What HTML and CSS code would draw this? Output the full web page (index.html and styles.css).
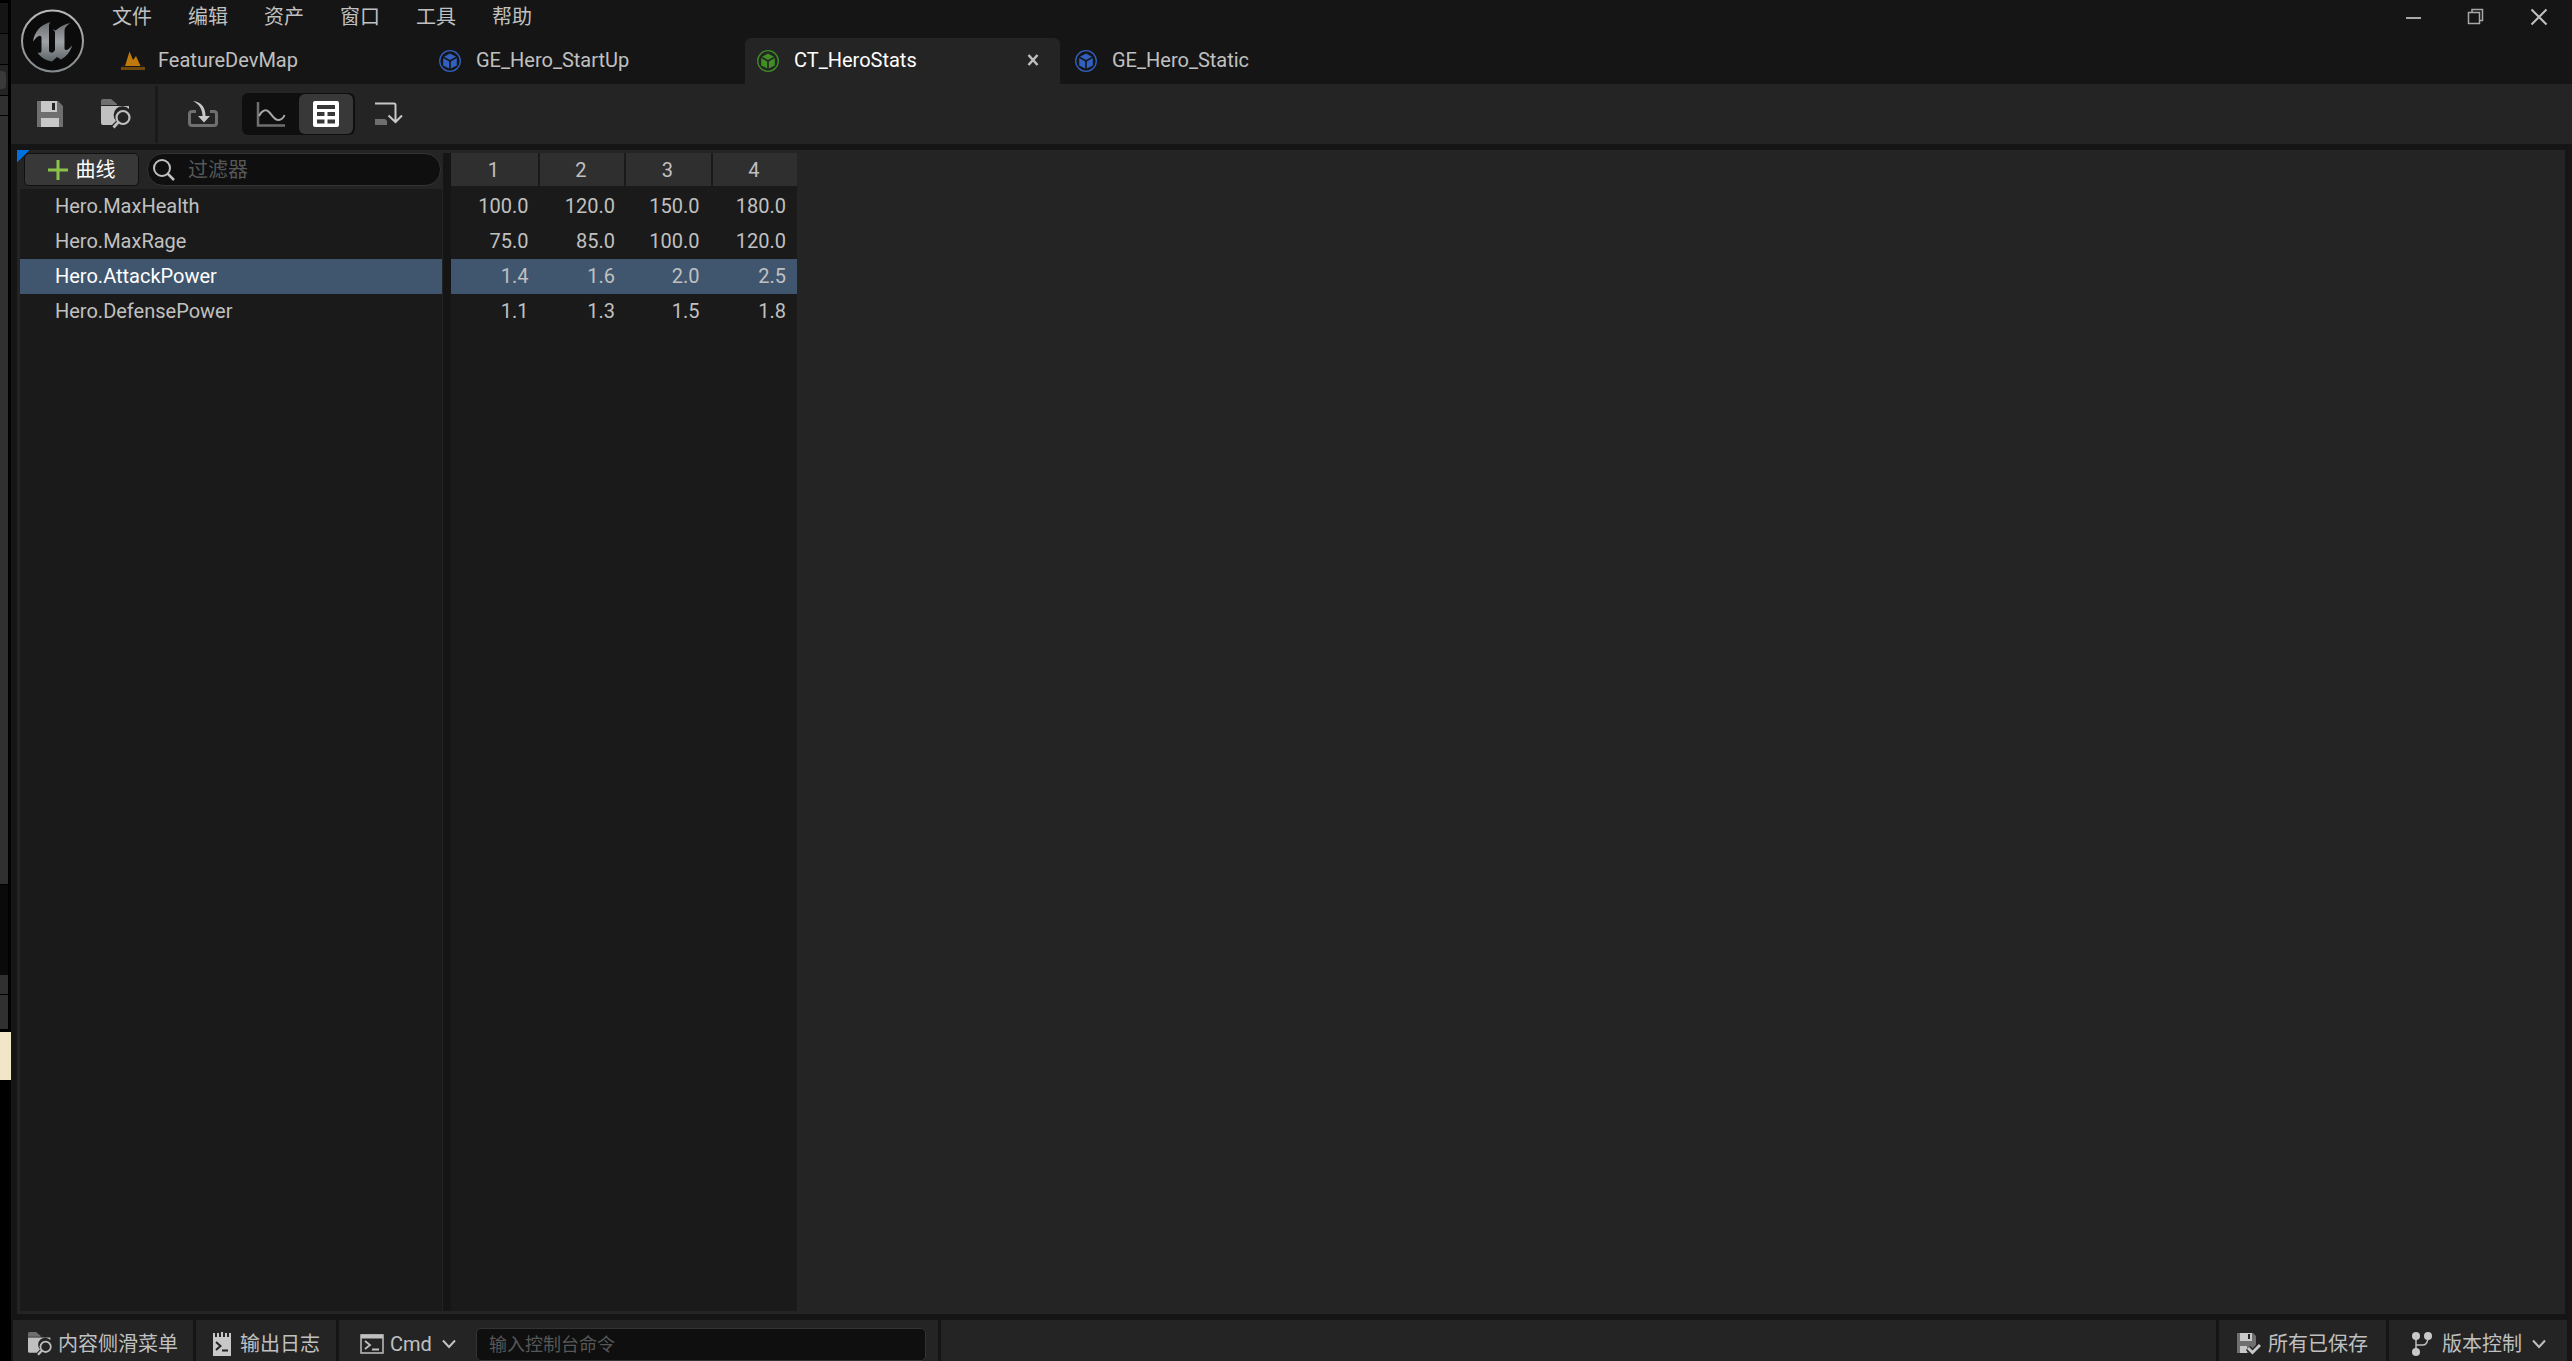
FILE: index.html
```html
<!DOCTYPE html>
<html lang="zh-CN">
<head>
<meta charset="utf-8">
<title>CT_HeroStats</title>
<link rel="stylesheet" href="styles.css">
</head>
<body>
<svg class="defs" aria-hidden="true">
  <symbol id="cube" viewBox="0 -1 24 24">
    <circle cx="11" cy="11" r="10.3" fill="none" stroke="currentColor" stroke-width="1.3"/>
    <path fill="currentColor" d="M11 3.4 17 6.7 11 10 5 6.7ZM4.2 8 10.2 11.4V18.6L4.2 15.4ZM17.8 8 11.8 11.4V18.6L17.8 15.4Z"/>
  </symbol>
  <symbol id="folder-search" viewBox="0 0 30 30">
    <path fill="#6f6f6f" d="M0 2Q0 0 2 0H10L16 5V6H0Z"/>
    <path fill="#c0c0c0" d="M0 7H28V10A8.6 8.6 0 0 0 15 22L11 26H2Q0 26 0 24Z"/>
    <circle cx="22" cy="18.500" r="6.500" fill="none" stroke="#c0c0c0" stroke-width="2.200"/>
    <path d="M17.500 23 12.500 28.500" stroke="#c0c0c0" stroke-width="2.800"/>
  </symbol>
  <symbol id="chevron" viewBox="0 0 14 10">
    <path d="M1 1.500 7 8 13 1.500" fill="none" stroke="#c0c0c0" stroke-width="2"/>
  </symbol>
</svg>

<div class="desktop">
  <div class="backdrop" aria-hidden="true">
    <i class="b-title"></i><i class="b-row"></i><i class="b-tool"></i><i class="b-sub"></i><i class="b-panel"></i><i class="b-dark"></i><i class="b-sub"></i><i class="b-foot"></i><i class="b-cream"></i>
  </div>

  <div class="editor">
    <header class="titlebar">
      <svg class="logo" viewBox="0 0 64 64" aria-label="Unreal Engine">
        <defs>
          <linearGradient id="metal" x1="0" y1="0" x2="0" y2="1"><stop offset="0" stop-color="#686c70"/><stop offset=".5" stop-color="#a0a3a6"/><stop offset="1" stop-color="#5c6468"/></linearGradient>
          <linearGradient id="ring" x1="0" y1="0" x2="0" y2="1"><stop offset="0" stop-color="#b8b8b8"/><stop offset="1" stop-color="#858a8c"/></linearGradient>
        </defs>
        <circle cx="31.500" cy="32" r="30.500" fill="#0b0b0b" stroke="url(#ring)" stroke-width="2"/>
        <path fill="url(#metal)" d="M29.500 13C20 15.500 13.500 22 12 32.500C15 28.500 18 26 19.500 27C20.500 27.500 20.500 28.500 20.500 29.500V41.500C20.500 44 19 44 16.500 43.500C20 49 25.500 51.500 31 52.500L36 48L40 50.500C45.500 47.500 49.500 42.500 51 36.500C49 39 47 41 45 41C43.500 41 43.500 40 43.500 38.500V21.500C43.500 19 46 16 49.500 14C44 15 38.500 18 34.500 21.500C33.500 20.500 32.500 20.500 31.500 20.500C33.500 21.500 34 22.500 34 24V41C33 43 31.500 44 30 43.500C28.500 43.500 28 42.500 28 41V18.500C28 16 28 15 29.500 13Z"/>
      </svg>
      <div class="bars">
        <div class="menu-row">
          <nav class="menu">
            <button>文件</button><button>编辑</button><button>资产</button><button>窗口</button><button>工具</button><button>帮助</button>
          </nav>
          <div class="window-buttons">
            <button aria-label="最小化"><svg width="18" height="18"><path d="M2 10H17" stroke="#a8a8a8" stroke-width="2"/></svg></button>
            <button aria-label="还原"><svg width="18" height="18"><path d="M5 4V1.500H15.500V12.500H13" fill="none" stroke="#a8a8a8" stroke-width="1.500"/><path d="M1.500 4.500H12.500V15.500H1.500Z" fill="none" stroke="#a8a8a8" stroke-width="1.500"/></svg></button>
            <button aria-label="关闭"><svg width="18" height="18"><path d="M1.500 1.500 16.500 16.500M16.500 1.500 1.500 16.500" stroke="#c0c0c0" stroke-width="2"/></svg></button>
          </div>
        </div>
        <div class="tabs" role="tablist">
          <div class="tab"><svg class="tab-icon map" viewBox="0 0 24 20"><path fill="#c07a0c" d="M4 15 8.500 0.500 12 9 15 5 19.500 15Z"/><path fill="#70490f" d="M2.500 12 1 19H23L21.500 12 22 16H2Z"/><path d="M0 17.500H24" stroke="#70490f" stroke-width="3"/></svg><button role="tab">FeatureDevMap</button></div>
          <div class="tab"><svg class="tab-icon blue"><use href="#cube"/></svg><button role="tab">GE_Hero_StartUp</button></div>
          <div class="tab active"><svg class="tab-icon green"><use href="#cube"/></svg><button role="tab" aria-selected="true">CT_HeroStats</button><button class="tab-close" aria-label="关闭标签页"><svg width="12" height="12"><path d="M1.500 1 10.500 11M10.500 1 1.500 11" stroke="#c0c0c0" stroke-width="2.500"/></svg></button></div>
          <div class="tab"><svg class="tab-icon blue"><use href="#cube"/></svg><button role="tab">GE_Hero_Static</button></div>
        </div>
      </div>
    </header>

    <div class="toolbar">
      <button class="tool save" aria-label="保存"><svg width="26" height="28"><path fill="#6f6f6f" d="M0 1H21L26 6V27H0Z"/><path fill="#c8c8c8" d="M4 1H20V12H4ZM4 18H22V27H4Z"/><path fill="#242424" d="M15 3H18V10H15Z"/></svg></button>
      <button class="tool" aria-label="浏览"><svg width="30" height="30"><use href="#folder-search"/></svg></button>
      <span class="tool-divider"></span>
      <button class="tool import" aria-label="重新导入"><svg width="30" height="28"><path d="M8 11.500H4Q1.500 11.500 1.500 14V23Q1.500 25.500 4 25.500H26Q28.500 25.500 28.500 23V14Q28.500 11.500 26 11.500H22" fill="none" stroke="#6f6f6f" stroke-width="3"/><path fill="#c8c8c8" d="M5 1C13 2 17.500 7 17.500 16H22L16 22.500 10 16H14.500C14.500 9 11 4 5 1Z"/></svg></button>
      <div class="view-switch">
        <button aria-label="曲线视图"><svg width="30" height="28"><path d="M2 2V25.500H29" fill="none" stroke="#6f6f6f" stroke-width="2.500"/><path d="M3 16C6 10 10 9 13 12C17 16 19 21 23 20C26 19.500 27.500 18 28.500 15" fill="none" stroke="#a8a8a8" stroke-width="2"/></svg></button>
        <button class="on" aria-label="表格视图"><svg width="28" height="28"><path fill="#fff" fill-rule="evenodd" d="M3 1H25Q27 1 27 3V25Q27 27 25 27H3Q1 27 1 25V3Q1 1 3 1ZM5 5V9H23V5ZM5 12V16H12.500V12ZM15.500 12V16H23V12ZM5 19.500V23.500H12.500V19.500ZM15.500 19.500V23.500H23V19.500Z"/></svg></button>
      </div>
      <button class="tool append" aria-label="附加"><svg width="30" height="26"><path d="M1 2.500H20Q21.500 2.500 21.500 4V21M14.500 14.500 21.500 21 28 14.500" fill="none" stroke="#c8c8c8" stroke-width="2"/><path fill="#6f6f6f" d="M1 18H10Q13 18 13 21V24H1Z"/></svg></button>
    </div>

    <main class="panel">
      <section class="curves">
        <div class="curve-head">
          <button class="add"><svg width="20" height="20"><path d="M10 0V20M0 10H20" stroke="#8bc34a" stroke-width="3"/></svg>曲线</button>
          <label class="search"><svg width="24" height="24"><circle cx="10" cy="10" r="8" fill="none" stroke="#c0c0c0" stroke-width="2"/><path d="M15.500 15.500 22 22" stroke="#c0c0c0" stroke-width="2.500"/></svg><input type="search" placeholder="过滤器" aria-label="过滤器"></label>
        </div>
        <ul class="curve-list">
          <li>Hero.MaxHealth</li>
          <li>Hero.MaxRage</li>
          <li class="selected">Hero.AttackPower</li>
          <li>Hero.DefensePower</li>
        </ul>
      </section>
      <div class="splitter"></div>
      <section class="values">
        <table>
          <thead><tr><th>1</th><th>2</th><th>3</th><th>4</th></tr></thead>
          <tbody>
            <tr><td>100.0</td><td>120.0</td><td>150.0</td><td>180.0</td></tr>
            <tr><td>75.0</td><td>85.0</td><td>100.0</td><td>120.0</td></tr>
            <tr class="selected"><td>1.4</td><td>1.6</td><td>2.0</td><td>2.5</td></tr>
            <tr><td>1.1</td><td>1.3</td><td>1.5</td><td>1.8</td></tr>
          </tbody>
        </table>
      </section>
    </main>

    <footer class="status">
      <button class="seg drawer"><svg width="24" height="24"><use href="#folder-search"/></svg>内容侧滑菜单</button>
      <button class="seg log"><svg width="18" height="24"><path fill="#c8c8c8" d="M0 1H2V5H4V1H6V5H8V0H10V5H12V1H14V5H16V1H18V24H0Z"/><path d="M3 10 7.500 14 3 18M9 18.500H15" fill="none" stroke="#242424" stroke-width="2"/></svg>输出日志</button>
      <div class="seg console">
        <svg width="24" height="20"><path d="M1 1H23V19H1Z" fill="none" stroke="#c0c0c0" stroke-width="1.500"/><path d="M1 2.500H23" stroke="#c0c0c0" stroke-width="4"/><path d="M5 7 10 11 5 15M12 15.500H19" fill="none" stroke="#c0c0c0" stroke-width="1.800"/></svg>
        <span class="picker"><select aria-label="命令类型"><option>Cmd</option></select><svg width="14" height="10"><use href="#chevron"/></svg></span>
        <input type="text" placeholder="输入控制台命令" aria-label="输入控制台命令">
      </div>
      <div class="seg filler"></div>
      <button class="seg saved"><svg width="24" height="24"><path fill="#6f6f6f" d="M0 1H16L19 4V16L14 21H0Z"/><path fill="#c8c8c8" d="M3 1H15V9H3ZM3 14H10V21H3Z"/><path fill="#242424" d="M11 2H13V7H11Z"/><path d="M11 16 15.500 20.500 23 13" fill="none" stroke="#242424" stroke-width="6"/><path d="M11 16 15.500 20.500 23 13" fill="none" stroke="#c8c8c8" stroke-width="3"/></svg>所有已保存</button>
      <button class="seg vcs"><svg width="20" height="24"><path d="M4 4V20M4 13H11Q16 13 16 4" fill="none" stroke="#c0c0c0" stroke-width="1.500"/><g fill="#c8c8c8"><circle cx="4" cy="4" r="4"/><circle cx="16" cy="4" r="4"/><circle cx="4" cy="20" r="4"/></g></svg>版本控制<svg width="14" height="10"><use href="#chevron"/></svg></button>
    </footer>
  </div>
</div>
</body>
</html>
```

FILE: styles.css
```css
* { box-sizing: border-box; }

body {
  margin: 0;
  background: #151515;
  color: #c0c0c0;
  font: 20px/24px Roboto, "Noto Sans CJK SC", sans-serif;
}

button, input, select {
  margin: 0;
  padding: 0;
  border: 0;
  background: none;
  color: inherit;
  font: inherit;
}

svg { display: block; flex: none; }
.defs { position: absolute; width: 0; height: 0; }

.desktop { display: flex; height: 100vh; overflow: hidden; }

/* Sliver of the window behind the editor */
.backdrop {
  display: flex;
  flex-direction: column;
  flex: none;
  width: 11px;
  padding-top: 3px;
  background: #000;
}
.backdrop i { flex: none; width: 8px; margin-bottom: 1px; background: #303030; }
.b-title { height: 30px; }
.backdrop .b-title { background: #151515; }
.b-row { height: 30px; }
.backdrop .b-row { background: #1e1e1e; }
.b-tool { height: 30px; padding: 6px 2px 6px 0; }
.backdrop .b-tool { background: #242424; }
.b-tool::before { content: ""; display: block; height: 18px; border-radius: 0 4px 4px 0; background: #3a3a3a; }
.b-sub { height: 19px; }
.b-panel { height: 768px; }
.b-dark { height: 90px; }
.backdrop .b-dark { margin: 0; background: #0a0a0a; }
.b-foot { height: 34px; }
.backdrop .b-foot { margin-bottom: 3px; }
.b-cream { height: 48px; }
.backdrop .b-cream { width: 11px; background: #f2e6c8; }

.editor { display: flex; flex: 1; flex-direction: column; min-width: 0; }

.titlebar { display: flex; height: 84px; flex: none; }
.logo { width: 64px; height: 64px; margin: 9px 17px 0 10px; }
.bars { display: flex; flex: 1; flex-direction: column; justify-content: space-between; }
.menu-row { display: flex; justify-content: space-between; padding: 5px 24px 0 10px; }
.menu { display: flex; gap: 36px; }
.window-buttons { display: flex; align-items: center; gap: 45px; }

.tabs { display: flex; gap: 3px; margin-left: 7px; }
.tab {
  display: flex;
  align-items: center;
  width: 315px;
  height: 46px;
  padding: 0 21px 0 12px;
  border-radius: 6px 6px 0 0;
}
.tab.active { background: #242424; color: #fff; }
.tab button { padding-bottom: 2px; }
.tab-icon { width: 24px; height: 24px; margin-right: 13px; }
.tab-icon.map { height: 20px; }
.tab-close { margin-left: auto; }
.blue { color: #3260c0; }
.green { color: #3f8f25; }

.toolbar {
  display: flex;
  align-items: center;
  flex: none;
  height: 60px;
  padding-left: 26px;
  background: #242424;
}
.save { margin-right: 38px; }
.tool-divider { width: 3px; height: 57px; margin: 0 30px 0 24px; background: #1a1a1a; }
.view-switch {
  display: flex;
  gap: 1px;
  height: 42px;
  margin: 0 19px 0 24px;
  padding: 1px 2px;
  border-radius: 6px;
  background: #0f0f0f;
}
.view-switch button { display: grid; place-items: center; width: 54px; border-radius: 6px; }
.view-switch .on { background: #383838; }

.panel {
  display: flex;
  flex: 1;
  margin: 6px 7px 6px 6px;
  padding: 3px;
  background: linear-gradient(135deg, #0070e0 9px, #242424 9px);
}
.curves { display: flex; flex-direction: column; width: 422px; margin-right: 1px; }
.curve-head { display: flex; gap: 8px; padding: 0 1px 3px 4px; }
.add {
  display: flex;
  align-items: center;
  justify-content: center;
  flex: none;
  gap: 8px;
  width: 115px;
  height: 33px;
  border: 1px solid #111;
  border-radius: 5px;
  background: #383838;
  color: #fff;
}
.search {
  display: flex;
  align-items: center;
  flex: 1;
  gap: 12px;
  min-width: 0;
  height: 33px;
  padding: 0 16px 0 4px;
  border: 1px solid #333;
  border-radius: 16px;
  background: #0f0f0f;
}
input { flex: 1; min-width: 0; outline: 0; }
input::placeholder { color: #575757; opacity: 1; }

.curve-list { flex: 1; margin: 0; padding: 0; background: #1a1a1a; list-style: none; }
.curve-list li { height: 35px; padding-left: 35px; line-height: 34px; }
.curve-list .selected { background: #40566f; color: #fff; }

.splitter { width: 8px; background: #151515; }
.values { width: 346px; background: #1a1a1a; }
table { width: 100%; border-spacing: 0; table-layout: fixed; }
th { height: 36px; padding: 0 2px 0 0; border-bottom: 3px solid #1a1a1a; background: #2f2f2f; font-weight: 400; line-height: 32px; }
th + th { border-left: 2px solid #1a1a1a; }
td { height: 35px; padding: 0 11px 1px 0; line-height: 34px; text-align: right; }
td:nth-child(-n+2) { padding-right: 9px; }
tr.selected { background: #40566f; }

.status { display: flex; flex: none; gap: 3px; height: 41px; padding: 0 5px 0 2px; }
.seg {
  display: flex;
  align-items: center;
  gap: 7px;
  padding: 7px 15px 0;
  background: #242424;
  white-space: nowrap;
}
.drawer { width: 180px; gap: 6px; }
.log { width: 140px; gap: 9px; padding-left: 17px; }
.console { width: 599px; gap: 6px; padding: 7px 12px 0 21px; }
.filler { flex: 1; }
.saved { width: 167px; padding-left: 18px; }
.vcs { width: 178px; gap: 10px; padding-left: 23px; }
.picker { position: relative; width: 80px; }
.picker select { display: block; width: 66px; height: 24px; appearance: none; }
.picker svg { position: absolute; top: 7px; left: 52px; pointer-events: none; }
.console input {
  height: 33px;
  padding: 0 12px;
  border: 1px solid #333;
  border-radius: 5px;
  background: #0f0f0f;
  font-size: 18px;
}
```
